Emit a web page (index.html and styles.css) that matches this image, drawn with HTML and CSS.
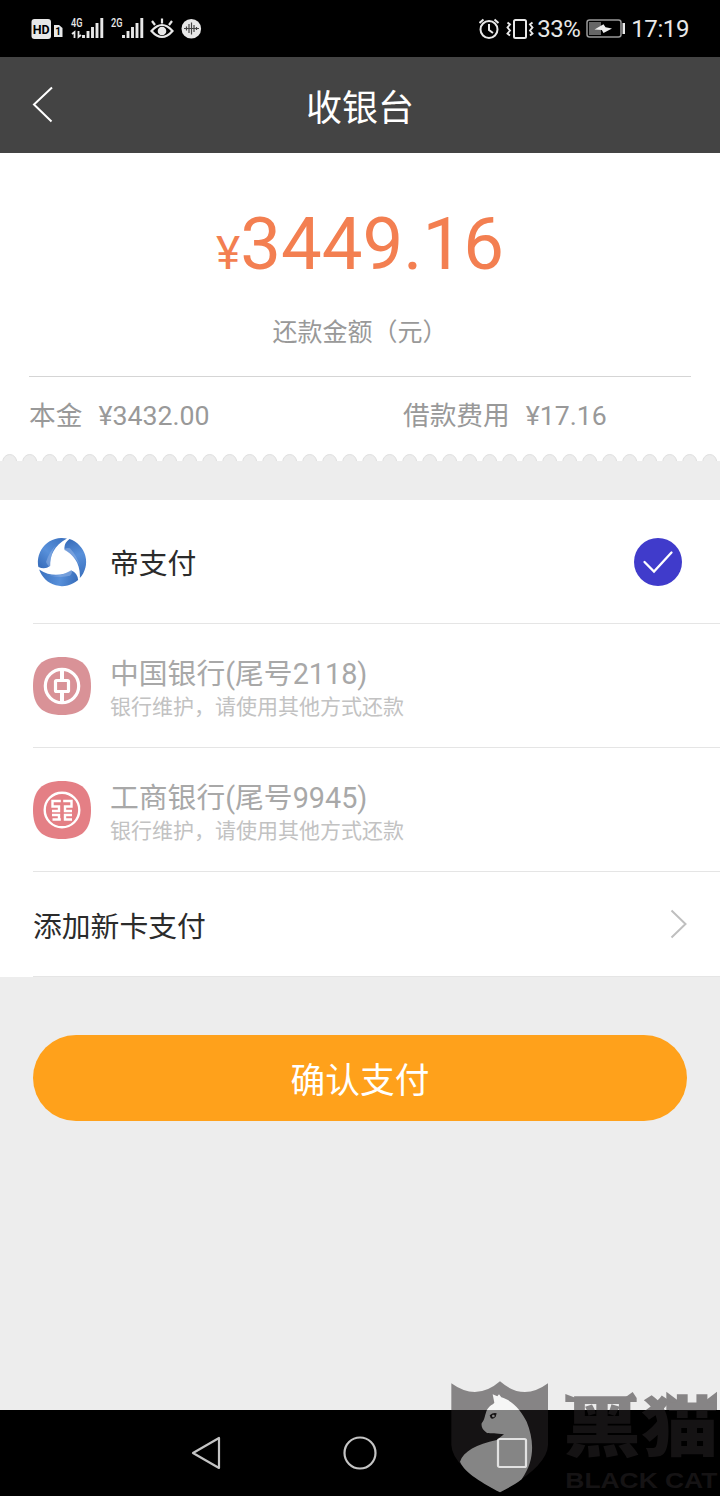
FILE: index.html
```html
<!DOCTYPE html>
<html lang="zh-CN">
<head>
<meta charset="utf-8">
<title>收银台</title>
<link rel="stylesheet" href="styles.css">
</head>
<body>
<div class="screen">
  <div class="status">
    <svg class="status-icons" width="180" height="57" viewBox="0 0 180 57">
      <rect x="1.500" y="19" width="19.500" height="20" rx="3" fill="#e8e8e8"/>
      <text x="11.200" y="34" class="st-hd" text-anchor="middle">HD</text>
      <path d="M24 25h5l3.500 3v9h-8.500z" fill="#e8e8e8"/>
      <text x="28" y="35" class="st-sim" text-anchor="middle">1</text>
      <text x="41" y="27" class="st-net" textLength="11.500" lengthAdjust="spacingAndGlyphs">4G</text>
      <path d="M44.500 38v-6l-2.500 2M48.500 31v6l2.500-2" fill="none" stroke="#e8e8e8" stroke-width="1.800"/>
      <path d="M53.500 38v-3M58 38v-7M62.500 38v-11M67 38v-15M71.800 38v-20" stroke="#e8e8e8" stroke-width="2.900"/>
      <text x="81" y="27" class="st-net" textLength="11.500" lengthAdjust="spacingAndGlyphs">2G</text>
      <path d="M93.500 38v-3M98 38v-7M102.500 38v-11M107 38v-15M111.800 38v-20" stroke="#e8e8e8" stroke-width="2.900"/>
      <path d="M121.500 31Q132 19 142.500 31Q132 43 121.500 31ZM122 21l3 4M132 18.500v5M142 21l-3 4" fill="none" stroke="#e8e8e8" stroke-width="2.200"/>
      <circle cx="132" cy="31" r="4.300" fill="#e8e8e8"/>
      <circle cx="161.300" cy="28.700" r="9.800" fill="#e8e8e8"/>
      <path d="M154 28.500h15M156.500 26.500v4M159 24v9M161.500 22.500v12M164 25v7M166.500 27v3" stroke="#444" stroke-width="1.200"/>
    </svg>
    <div class="status-right">
      <svg width="58" height="57" viewBox="0 0 58 57" fill="none" stroke="#e8e8e8" stroke-width="2">
        <circle cx="10" cy="29.500" r="8.500"/><path d="M10 24v6l4 3M.5 23l4-3.500M19.500 23l-4-3.500"/>
        <rect x="35" y="20" width="12" height="18" rx="1.500"/>
        <path d="M28.500 22.500l2.500 2-2.500 3 2.500 3-2.500 3 2.500 2M53.500 22.500l-2.500 2 2.500 3-2.500 3 2.500 3-2.500 2" stroke-width="1.900"/>
      </svg>
      <span class="percent">33%</span>
      <svg class="battery" width="40" height="57" viewBox="0 0 40 57">
        <rect x="1" y="20" width="34" height="17" rx="2.500" fill="none" stroke="#999" stroke-width="1.500"/>
        <path d="M3 22h12v13h-12z" fill="#666"/><path d="M36.500 23h2.500v11h-2.500z" fill="#e8e8e8"/>
        <path d="M8.500 29.500L17.500 24.300L19.500 27.300L26 28.500L17.500 33L15.800 30Z" fill="#eee"/>
      </svg>
      <span class="time">17:19</span>
    </div>
  </div>

  <header class="header">
    <svg class="back" width="22" height="38" viewBox="0 0 22 38"><path d="M20 1.500L2 18.500L19.500 35.500" fill="none" stroke="#fff" stroke-width="2"/></svg>
    <h1 class="title">收银台</h1>
  </header>

  <section class="summary">
    <div class="amount"><span class="yen">¥</span>3449.16</div>
    <div class="amount-label">还款金额（元）</div>
    <div class="details">
      <div class="detail"><span>本金</span><span>¥3432.00</span></div>
      <div class="detail"><span>借款费用</span><span>¥17.16</span></div>
    </div>
  </section>
  <svg class="scallop" width="720" height="47" viewBox="0 0 720 47">
    <defs><pattern id="teeth" width="20" height="9" patternUnits="userSpaceOnUse">
      <path d="M2.700 9A7 7.500 0 0 1 16.700 9" fill="#ededed" stroke="#dedede" stroke-width="1"/>
    </pattern></defs>
    <rect width="720" height="9" fill="url(#teeth)"/>
    <rect y="8" width="720" height="39" fill="#ededed"/>
  </svg>

  <main class="list">
    <div class="row">
      <svg class="logo" width="58" height="58" viewBox="-29 -29 58 58">
        <defs>
          <linearGradient id="blade" x1="0" y1="1" x2=".8" y2="0"><stop offset="0" stop-color="#3469b7"/><stop offset=".5" stop-color="#5890da"/><stop offset="1" stop-color="#3f75c2"/></linearGradient>
          <g id="wing">
            <path d="M5 -23.500A24 24 0 0 0 -23.600 5Q-17 8 -12 4C-12 -6 -8 -17 5 -23.500Z" fill="url(#blade)"/>
            <path d="M-5 -18C-10 -13 -14 -7 -16 0Q-14 5 -11.500 4C-12 -4 -10 -12 -5 -18Z" fill="#8eafe3" opacity=".6"/>
          </g>
        </defs>
        <use href="#wing"/><use href="#wing" transform="rotate(120)"/><use href="#wing" transform="rotate(240)"/>
      </svg>
      <div class="name">帝支付</div>
      <svg class="check" width="48" height="48" viewBox="0 0 48 48"><circle cx="24" cy="24" r="24" fill="#403bcb"/><path d="M10.500 24L20 33.500L37.500 14.500" fill="none" stroke="#fff" stroke-width="2.300" stroke-linecap="round"/></svg>
    </div>
    <div class="row disabled">
      <svg class="logo" width="58" height="58" viewBox="-29 -29 58 58">
        <path d="M0 -29C20 -29 29 -20 29 0S20 29 0 29S-29 20 -29 0S-20 -29 0 -29Z" fill="#d99297"/>
        <g fill="none" stroke="#fff"><circle r="16.700" stroke-width="3.200"/><rect x="-6.500" y="-5.500" width="13" height="11" rx="1" stroke-width="3.200"/><path d="M0 -17V-6M0 6V17" stroke-width="4"/></g>
      </svg>
      <div><div class="name">中国银行(尾号2118)</div><div class="note">银行维护，请使用其他方式还款</div></div>
    </div>
    <div class="row disabled">
      <svg class="logo" width="58" height="58" viewBox="-29 -29 58 58">
        <path d="M0 -29C20 -29 29 -20 29 0S20 29 0 29S-29 20 -29 0S-20 -29 0 -29Z" fill="#e47f85"/>
        <g fill="none" stroke="#fff" stroke-width="2.400"><circle r="17.300"/>
          <path d="M-1.200 -9H-9.500V-3.500H-3V1H-10M-10 5H-3V9.500H-9.500M-3 9.500H-1.200M1.200 -9H9.500V-3.500H3V1H10M10 5H3V9.500H10"/></g>
      </svg>
      <div><div class="name">工商银行(尾号9945)</div><div class="note">银行维护，请使用其他方式还款</div></div>
    </div>
    <div class="row add">
      <div class="name">添加新卡支付</div>
      <svg class="chevron" width="17" height="30" viewBox="0 0 17 30"><path d="M1.500 1.500L15.500 15L1.500 28.500" fill="none" stroke="#bfbfbf" stroke-width="2"/></svg>
    </div>
  </main>
  <button class="confirm">确认支付</button>

  <nav class="nav">
    <svg width="36" height="36" viewBox="0 0 36 36"><path d="M29 3V33L3 18Z" class="nav-shape"/></svg>
    <svg width="36" height="36" viewBox="0 0 36 36"><circle cx="18" cy="18" r="15.500" class="nav-shape"/></svg>
    <svg width="32" height="32" viewBox="0 0 32 32"><rect x="2" y="2" width="28" height="28" rx="1.500" class="nav-shape"/></svg>
  </nav>

  <svg class="watermark" width="290" height="126" viewBox="0 0 870 378">
    <g opacity=".52">
      <path d="M64 40Q140 95 210 34Q280 95 354 40V225Q352 290 210 367Q66 290 64 225Z" fill="#2a2527"/>
      <path d="M193 98L188 73L202 79L207 73L214 82C250 92 275 125 290 155C312 210 316 270 275 328C255 345 230 355 210 367C160 340 105 310 90 275C100 245 140 222 200 210L222 193C200 188 180 192 170 188C158 180 153 170 155 160C165 150 165 130 172 118C180 105 190 103 193 98Z" fill="#fff"/>
      <path d="M179 136Q190 126 200 130L197 140Q188 150 182 144Z" fill="#2a2527"/>
      <circle cx="190" cy="138" r="4" fill="#fff"/>
      <g fill="#2a2527">
        <path d="M406 72L438 84H583L608 66L620 84V96H406ZM709 65L765 107H806L861 65V120H709Z"/>
        <text x="400" y="243" class="wm-cn" textLength="466" lengthAdjust="spacingAndGlyphs">黑猫</text>
        <text x="406" y="354" class="wm-en" textLength="456" lengthAdjust="spacingAndGlyphs">BLACK CAT</text>
      </g>
    </g>
  </svg>
</div>
</body>
</html>
```
FILE: styles.css
```css
* { box-sizing: border-box; }
body { margin: 0; font-family: Roboto, "Noto Sans CJK SC", sans-serif; }
svg { display: block; flex: none; }
.screen { position: relative; width: 720px; height: 1496px; overflow: hidden; background: #ededed; display: flex; flex-direction: column; }
.status { height: 57px; background: #000; color: #e8e8e8; display: flex; justify-content: space-between; padding: 0 31px 0 30px; flex: none; }
.status-right { display: flex; font-size: 24px; line-height: 58px; }
.percent { margin-left: 0; width: 48.5px; letter-spacing: -0.5px; }
.time { margin-left: 5.5px; letter-spacing: -0.4px; }
.st-hd { font-size: 12.5px; font-weight: 700; fill: #000; }
.st-sim { font-size: 10px; font-weight: 700; fill: #000; }
.st-net { font-size: 12px; font-weight: 500; fill: #e8e8e8; }
.header { height: 96px; flex: none; background: #444; color: #fff; display: grid; grid-template-columns: 60px 1fr 60px; align-items: center; }
.back { margin-left: 32px; }
.title { margin: 0; font-size: 36px; font-weight: 400; line-height: 50px; text-align: center; padding-top: 8px; }
.summary { height: 300px; flex: none; background: #fff; padding: 50px 29px 0; }
.amount { height: 84px; line-height: 84px; font-size: 72.5px; text-align: center; color: #f37f51; white-space: nowrap; }
.yen { font-size: 46px; }
.amount-label { height: 89px; padding-top: 26px; line-height: 40px; font-size: 25px; color: #999; text-align: center; }
.details { border-top: 1px solid #d5d5d5; display: grid; grid-template-columns: 374px 1fr; padding-top: 19px; font-size: 26.7px; line-height: 40px; color: #999; }
.detail { display: flex; gap: 16px; }
.scallop { background: #fff; }
.list { height: 477px; flex: none; background: #fff; padding-left: 33px; }
.row { height: 124px; border-bottom: 1px solid #e5e5e5; display: flex; align-items: center; color: #2b2b2b; }
.logo { margin-right: 19px; }
.name { font-size: 28.8px; line-height: 36px; padding-top: 4px; }
.check { margin-left: auto; margin-right: 38px; }
.disabled .name { color: #a8a8a8; padding-top: 6px; }
.note { font-size: 21px; line-height: 30px; color: #c2c2c2; }
.add { height: 105px; }
.add .name { padding-top: 6px; }
.chevron { margin-left: auto; margin-right: 33px; }
.confirm { flex: none; margin: 58px 33px 0; height: 86px; border: 0; border-radius: 43px; background: #ffa11b; color: #fff; font: 400 34.7px/50px Roboto, "Noto Sans CJK SC", sans-serif; padding: 6px 0 0; }
.nav { margin-top: auto; height: 86px; flex: none; background: #000; display: grid; grid-template-columns: repeat(3, 152px); justify-content: center; justify-items: center; align-items: center; }
.nav-shape { fill: none; stroke: #c4c4c4; stroke-width: 2.2; stroke-linejoin: round; }
.watermark { position: absolute; right: 0; bottom: 0; }
.wm-cn { font: 900 198px "Noto Sans CJK SC", sans-serif; }
.wm-en { font: 700 66px "Liberation Sans", sans-serif; }
```
